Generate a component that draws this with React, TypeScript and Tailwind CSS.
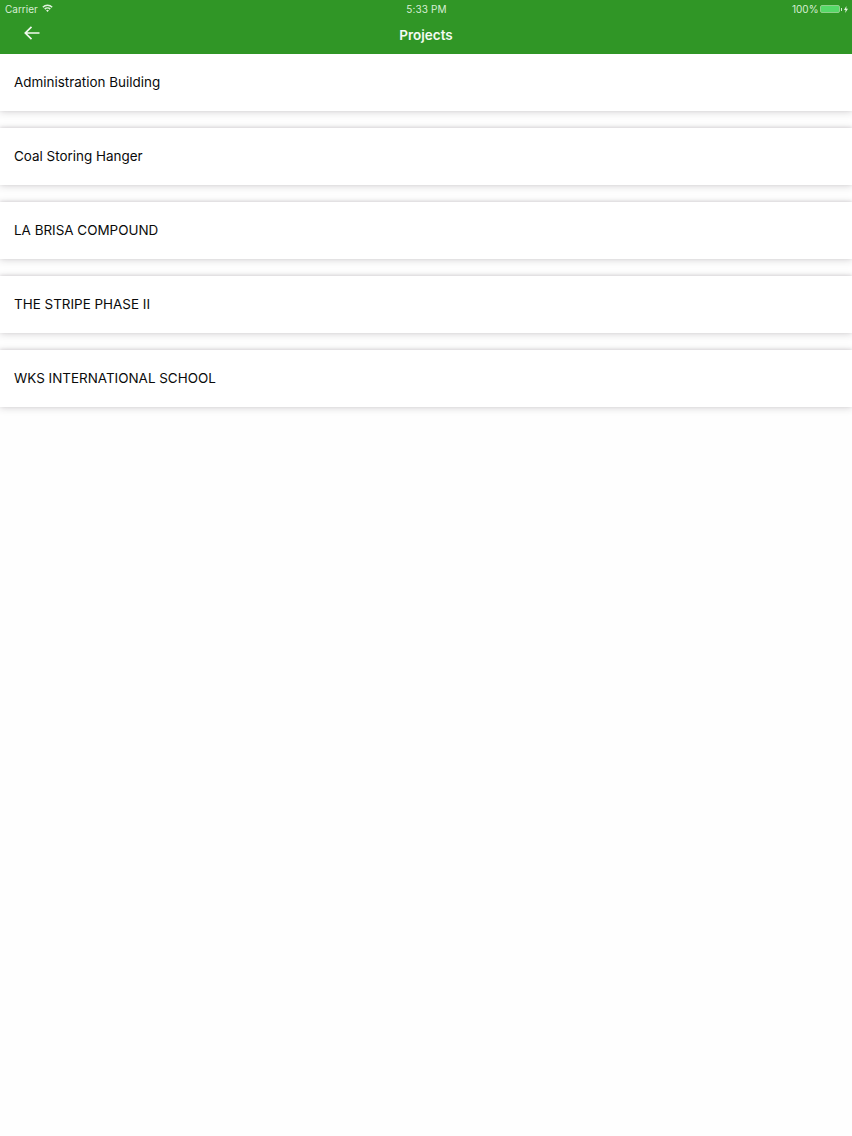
const projects = ["Administration Building", "Coal Storing Hanger", "LA BRISA COMPOUND", "THE STRIPE PHASE II", "WKS INTERNATIONAL SCHOOL"];

export default function App() {
  return (
    <div className="flex h-[1136px] w-[852px] flex-col overflow-hidden bg-[#fefefe] font-['Inter',sans-serif]">
      <header className="relative z-10 flex h-[54px] shrink-0 flex-col bg-[#309626] text-white">
        <div className="flex h-[18px] items-center justify-between pl-[5px] pr-[4px] text-[10px] leading-none text-[#d8eed5]">
          <div className="flex w-[120px] items-center gap-[4px]">
            <span>Carrier</span>
            <svg width="11" height="8" viewBox="0 0 11 8" className="mb-[2px]">
              <path d="M0.3 2.7A7.3 7.3 0 0 1 10.7 2.7L9.6 3.8A5.7 5.7 0 0 0 1.4 3.8Z M2.2 4.6A4.6 4.6 0 0 1 8.8 4.6L7.7 5.7A3 3 0 0 0 3.3 5.7Z M4.1 6.5A2 2 0 0 1 6.9 6.5L5.5 8Z" fill="#e3f3e0" />
            </svg>
          </div>
          <span className="tracking-[0.15px]">5:33 PM</span>
          <div className="flex w-[120px] items-center justify-end">
            <span className="mr-[2px]">100%</span>
            <div className="h-[8px] w-[20px] rounded-[2px] border border-[#8fd08a] bg-[#55d968]" />
            <div className="ml-[0.5px] h-[3px] w-[1px] bg-[#cfe8cb]" />
            <svg width="4" height="7" viewBox="0 0 4 7" className="ml-[2px]">
              <path d="M2.4 0L0 4H1.6L1.2 7L4 2.8H2.3Z" fill="#e3f3e0" />
            </svg>
          </div>
        </div>
        <div className="relative flex h-[36px] items-center justify-center">
          <svg width="16" height="14" viewBox="0 0 16 14" fill="none" stroke="#f2faf0" strokeWidth="1.7" className="absolute left-[24px] top-[8px]">
            <path d="M15.5 7H1.5M7.5 0.8L1.3 7L7.5 13.2" />
          </svg>
          <span className="mt-[-2px] text-[13.5px] font-semibold text-[#f4fbf3]">Projects</span>
        </div>
      </header>
      <main className="flex flex-col gap-[17px]">
        {projects.map((p) => (
          <div key={p} className="flex h-[57px] items-center bg-white pl-[14px] text-[13.45px] text-[#0a0a0a] shadow-[0_1px_7px_rgba(70,60,70,0.22),0_-1px_3px_rgba(70,60,70,0.12)]">
            {p}
          </div>
        ))}
      </main>
    </div>
  );
}
